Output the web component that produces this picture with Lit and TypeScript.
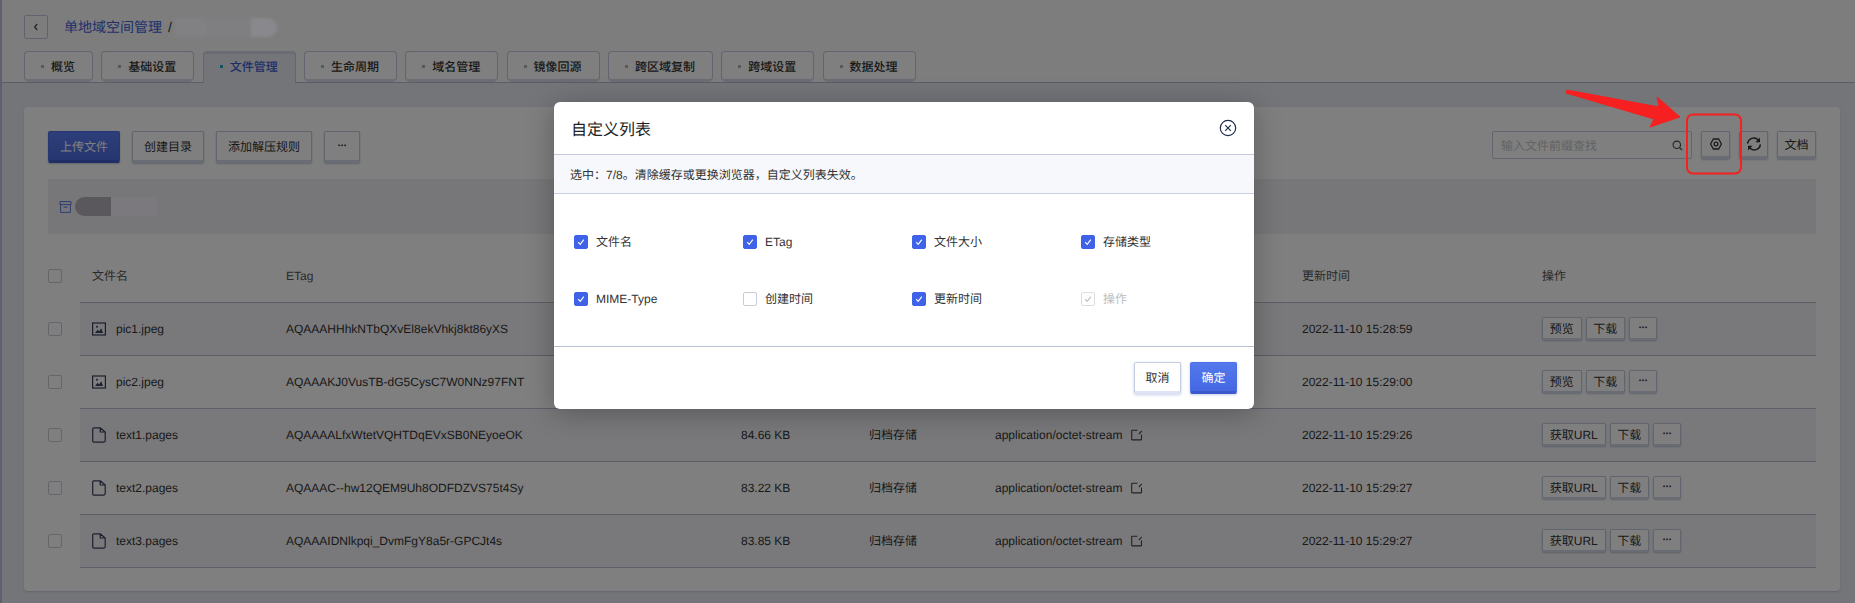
import { LitElement, html, css, svg } from "lit";
import { customElement } from "lit/decorators.js";

const tabs = ["概览", "基础设置", "文件管理", "生命周期", "域名管理", "镜像回源", "跨区域复制", "跨域设置", "数据处理"];

type Row = { name: string; kind: "img" | "file"; etag: string; size: string; store: string; mime: string; time: string; first: string };
const rows: Row[] = [
  { name: "pic1.jpeg", kind: "img", etag: "AQAAAHHhkNTbQXvEl8ekVhkj8kt86yXS", size: "", store: "", mime: "", time: "2022-11-10 15:28:59", first: "预览" },
  { name: "pic2.jpeg", kind: "img", etag: "AQAAAKJ0VusTB-dG5CysC7W0NNz97FNT", size: "", store: "", mime: "", time: "2022-11-10 15:29:00", first: "预览" },
  { name: "text1.pages", kind: "file", etag: "AQAAAALfxWtetVQHTDqEVxSB0NEyoeOK", size: "84.66 KB", store: "归档存储", mime: "application/octet-stream", time: "2022-11-10 15:29:26", first: "获取URL" },
  { name: "text2.pages", kind: "file", etag: "AQAAAC--hw12QEM9Uh8ODFDZVS75t4Sy", size: "83.22 KB", store: "归档存储", mime: "application/octet-stream", time: "2022-11-10 15:29:27", first: "获取URL" },
  { name: "text3.pages", kind: "file", etag: "AQAAAIDNlkpqi_DvmFgY8a5r-GPCJt4s", size: "83.85 KB", store: "归档存储", mime: "application/octet-stream", time: "2022-11-10 15:29:27", first: "获取URL" },
];

const columns: { label: string; state: "on" | "off" | "locked" }[] = [
  { label: "文件名", state: "on" },
  { label: "ETag", state: "on" },
  { label: "文件大小", state: "on" },
  { label: "存储类型", state: "on" },
  { label: "MIME-Type", state: "on" },
  { label: "创建时间", state: "off" },
  { label: "更新时间", state: "on" },
  { label: "操作", state: "locked" },
];

const imgIcon = svg`<svg class="ficon" width="14" height="14" viewBox="0 0 14 14"><rect x=".6" y="1" width="12.8" height="12" fill="none" stroke="#39415c" stroke-width="1.2"/><path d="M3 11l2.6-3.2 1.6 1.7 2-3.2L11 11z" fill="#39415c"/><circle cx="5" cy="4.8" r="1" fill="#39415c"/></svg>`;
const fileIcon = svg`<svg class="ficon" width="14" height="16" viewBox="0 0 14 16"><path d="M1.8.8h6.4L13.2 5v8.6a1.5 1.5 0 0 1-1.5 1.5H1.8A1.2 1.2 0 0 1 .7 13.9V1.9A1.1 1.1 0 0 1 1.8.8zM8.2.8V5h5" fill="none" stroke="#39415c" stroke-width="1.2" stroke-linejoin="round"/></svg>`;
const editIcon = svg`<svg width="12" height="12" viewBox="0 0 12 12"><path d="M6.5 1.2H1.3a.6.6 0 0 0-.6.6v8.4c0 .4.3.7.7.7h8.4c.4 0 .7-.3.7-.7V5.4M7.8 5.2l3-3.4" fill="none" stroke="#444" stroke-width="1.1"/></svg>`;
const check = svg`<svg width="10" height="10" viewBox="0 0 10 10"><path d="M2.2 5.2l2 2.2 3.6-4.8" fill="none" stroke="currentColor" stroke-width="1.1"/></svg>`;

@customElement("app-root")
export class AppRoot extends LitElement {
  static styles = css`
    :host { display: block; font-family: "Liberation Sans", "Noto Sans CJK SC", sans-serif; font-size: 12px; color: #333; text-rendering: geometricPrecision; }
    * { box-sizing: border-box; }
    .page { position: relative; width: 100%; height: 603px; overflow: hidden; background: #e8eaf3; box-shadow: inset 2px 0 0 #b9c2da; }
    .top { background: #fbfbfc; padding: 15px 0 0 22px; border-bottom: 1px solid #b6bccd; height: 83px; margin-left: 2px; }
    .crumb { display: flex; align-items: center; height: 24px; }
    .back { width: 24px; height: 24px; border: 1px solid #c2c8d8; border-radius: 2px; display: flex; align-items: center; justify-content: center; }
    .crumb a { margin-left: 16px; font-size: 14px; color: #4060d8; }
    .sep { margin-left: 6px; font-size: 14px; color: #333; }
    .blur { position: relative; z-index: 1; display: flex; height: 19px; margin-left: 3px; filter: blur(1.5px); }
    .blur i { display: block; height: 100%; }
    .blur .a { width: 31px; background: #818183; }
    .blur .b { width: 45px; background: #7f7f81; }
    .blur .c { width: 26px; background: #89898d; border-radius: 0 10px 10px 0; }
    .tabs { display: flex; gap: 8.3px; margin-top: 12px; height: 31px; }
    .tab { display: flex; align-items: center; height: 31px; padding: 2px 17px 0 16px; border: 1px solid #c4cadb; border-bottom: 3px solid #d6dbeb; border-radius: 4px 4px 5px 5px; background: #fff; color: #333; font-weight: 500; }
    .tab .dot { width: 3px; height: 3px; margin-right: 7px; background: #b0b0b0; }
    .tab.on { background: #e8eaf3; border-top: 3px solid #d3d8e8; border-bottom: 0; color: #3f5cd0; border-radius: 4px 4px 0 0; height: 32px; padding-top: 0; padding-bottom: 4px; }
    .tab.on .dot { background: #24a8c4; }
    .card { margin: 24px 15px 0 24px; padding: 24px 24px 23px; background: #fff; border-radius: 4px; box-shadow: 0 1px 2px rgba(70,80,120,.2); }
    .bar { display: flex; align-items: flex-start; gap: 12px; height: 32px; }
    .btn { display: inline-flex; align-items: center; justify-content: center; height: 32px; padding: 0 11px; border: 1px solid #c4cadb; border-bottom: 3px solid #d3d8e9; border-radius: 2px; background: #fff; color: #333; font-size: 12px; box-shadow: 0 1px 2px rgba(60,70,110,.3); white-space: nowrap; }
    .btn.primary { background: linear-gradient(#5a7df4, #4a6bdf); border-color: #4d6fe6; border-bottom-color: #3f5dc8; color: #fff; }
    .btn.sm { height: 28px; }
    .btn.xs { height: 23px; padding: 0 6.75px; border-bottom-width: 2px; }
    .btn.more { width: 36px; padding: 0; letter-spacing: -.6px; font-weight: 700; font-size: 11px; }
    .btn.xs.more { width: 28px; padding: 0; }
    .right { margin-left: auto; display: flex; gap: 9px; align-items: center; }
    .search { display: flex; align-items: center; justify-content: space-between; width: 200px; height: 28px; padding: 0 8px; border: 1px solid #c4cadb; border-radius: 2px; background: #fff; color: #c6c6c6; }
    .sq { width: 29px; padding: 0; }
    .doc { width: 39px; padding: 0; }
    .strip { display: flex; align-items: center; height: 55px; margin-top: 16px; padding-left: 11px; background: #eeeff4; }
    .pill { position: relative; z-index: 1; display: flex; height: 19px; margin-left: 3px; filter: blur(.4px); }
    .pill .d { width: 36px; background: #5a585c; border-radius: 10px 0 0 10px; }
    .pill .l { width: 47px; background: #7b797d; }
    .table { margin-top: 16px; }
    .row { display: grid; grid-template-columns: 32px 1fr; height: 53px; }
    .cb-cell { display: flex; align-items: center; padding-bottom: 1px; }
    .cells { display: grid; grid-template-columns: 194px 455px 128px 126px 307px 240px 286px; border-bottom: 1px solid #b8bdd0; padding-bottom: 1px; align-items: center; }
    .row.odd .cells { background: #f2f3f7; }
    .cell { padding-left: 12px; display: flex; align-items: center; white-space: nowrap; color: #333; }
    .head .cell { color: #555; }
    .ficon { margin-right: 10px; flex: none; }
    .mime svg { margin-left: 9px; }
    .acts { gap: 4px; }
    .box { width: 14px; height: 14px; border: 1px solid #c8ccd8; border-radius: 2px; background: #fff; display: inline-flex; align-items: center; justify-content: center; flex: none; }
    .box.on { background: #3f63e8; border-color: #3f63e8; color: #fff; }
    .box.locked { border-color: #dcdcdc; color: #bbb; }
    .scrim { position: absolute; inset: 0; background: rgba(0, 0, 0, .5); }
    .modal { position: absolute; z-index: 2; left: 554px; top: 102px; width: 700px; height: 307px; background: #fff; border-radius: 6px; box-shadow: 0 4px 28px rgba(0,0,0,.28); display: flex; flex-direction: column; overflow: hidden; }
    .m-head { display: flex; align-items: center; justify-content: space-between; height: 53px; padding: 0 17px; border-bottom: 1px solid #c3cadb; font-size: 16px; color: #222; flex: none; }
    .notice { display: flex; align-items: center; height: 39px; padding-left: 16px; background: #f7f8fb; border-bottom: 1px solid #c9d0e2; color: #333; flex: none; }
    .m-body { display: grid; grid-template-columns: repeat(4, 169px); grid-auto-rows: 57px; padding: 19px 0 0 20px; height: 153px; border-bottom: 1px solid #b6c2d0; flex: none; }
    .opt { display: flex; align-items: center; gap: 8px; color: #333; }
    .opt.locked { color: #bdbdbd; }
    .m-foot { display: flex; justify-content: flex-end; gap: 9px; padding: 15px 17px 0 0; }
    .m-foot .btn { width: 47px; padding: 0; border-color: #c5cde0; border-bottom-color: #dde2f4; box-shadow: 0 1px 3px rgba(70,90,170,.3); }
    .m-foot .btn.primary { background: linear-gradient(#5379ec, #4467e2); border-color: #4a6fe6; border-bottom-color: #3b59cb; }
    .annot { position: absolute; z-index: 3; inset: 0; width: 100%; height: 100%; pointer-events: none; }
  `;

  private box(state: string) {
    return html`<span class="box ${state}">${state === "off" ? "" : check}</span>`;
  }

  render() {
    return html`<div class="page">
      <div class="top">
        <div class="crumb">
          <div class="back"><svg width="8" height="10" viewBox="0 0 8 10"><path d="M5.2 2 2.6 5l2.6 3" fill="none" stroke="#444" stroke-width="1.2"/></svg></div>
          <a>单地域空间管理</a><span class="sep">/</span>
          <div class="blur"><i class="a"></i><i class="b"></i><i class="c"></i></div>
        </div>
        <div class="tabs">
          ${tabs.map((t, i) => html`<div class="tab ${i === 2 ? "on" : ""}"><span class="dot"></span>${t}</div>`)}
        </div>
      </div>

      <div class="card">
        <div class="bar">
          <span class="btn primary">上传文件</span>
          <span class="btn">创建目录</span>
          <span class="btn">添加解压规则</span>
          <span class="btn more">···</span>
          <div class="right">
            <div class="search"><span>输入文件前缀查找</span>
              <svg width="11" height="11" viewBox="0 0 11 11"><circle cx="4.8" cy="4.8" r="3.7" fill="none" stroke="#444" stroke-width="1.1"/><path d="M7.6 7.6 10 10" stroke="#444" stroke-width="1.1"/></svg>
            </div>
            <span class="btn sm sq"><svg width="14" height="14" viewBox="0 0 14 14"><path d="M4.3 2h5.4l2.7 5-2.7 5H4.3L1.6 7z" fill="none" stroke="#333" stroke-width="1.3" stroke-linejoin="round"/><circle cx="7" cy="7" r="1.9" fill="none" stroke="#333" stroke-width="1.2"/></svg></span>
            <span class="btn sm sq"><svg width="16" height="14" viewBox="0 0 16 14"><path d="M1.6 6.6A6.2 6.2 0 0 1 12.4 3.2M14.4 7.4A6.2 6.2 0 0 1 3.6 10.8" fill="none" stroke="#333" stroke-width="1.5"/><path d="M14 .6v4.6H9.4zM2 13.4V8.8h4.6z" fill="#333"/></svg></span>
            <span class="btn sm doc">文档</span>
          </div>
        </div>
        <div class="strip">
          <svg width="13" height="12" viewBox="0 0 13 12"><path d="M1 .6h11v3H1zM1.6 3.6v7.8h9.8V3.6M4.5 6.2h4" fill="none" stroke="#5b78e6" stroke-width="1"/></svg>
          <div class="pill"><div class="d"></div><div class="l"></div></div>
        </div>
        <div class="table">
          <div class="row head">
            <div class="cb-cell">${this.box("off")}</div>
            <div class="cells">
              <div class="cell">文件名</div><div class="cell">ETag</div><div class="cell">文件大小</div><div class="cell">存储类型</div><div class="cell">MIME-Type</div><div class="cell">更新时间</div><div class="cell">操作</div>
            </div>
          </div>
          ${rows.map((r, i) => html`<div class="row ${i % 2 === 0 ? "odd" : ""}">
            <div class="cb-cell">${this.box("off")}</div>
            <div class="cells">
              <div class="cell">${r.kind === "img" ? imgIcon : fileIcon}${r.name}</div>
              <div class="cell">${r.etag}</div>
              <div class="cell">${r.size}</div>
              <div class="cell">${r.store}</div>
              <div class="cell mime">${r.mime}${r.mime ? editIcon : ""}</div>
              <div class="cell">${r.time}</div>
              <div class="cell acts"><span class="btn xs">${r.first}</span><span class="btn xs">下载</span><span class="btn xs more">···</span></div>
            </div>
          </div>`)}
        </div>
      </div>

      <div class="scrim"></div>

      <div class="modal">
        <div class="m-head">自定义列表
          <svg width="18" height="18" viewBox="0 0 18 18"><circle cx="9" cy="9" r="7.7" fill="none" stroke="#1f2d4d" stroke-width="1.2"/><path d="M6.2 6.2l5.6 5.6M11.8 6.2l-5.6 5.6" stroke="#1f2d4d" stroke-width="1.2"/></svg>
        </div>
        <div class="notice">选中：7/8。清除缓存或更换浏览器，自定义列表失效。</div>
        <div class="m-body">
          ${columns.map((c) => html`<label class="opt ${c.state === "locked" ? "locked" : ""}">${this.box(c.state)}${c.label}</label>`)}
        </div>
        <div class="m-foot"><span class="btn">取消</span><span class="btn primary">确定</span></div>
      </div>

      <svg class="annot" viewBox="0 0 1855 603">
        <path d="M1567 90 1659 107 1657 97 1680 117 1650 127 1654 119 1566 93Z" fill="#f5201f" stroke="#f5201f" stroke-width="1" stroke-linejoin="round"/>
        <rect x="1687" y="114.5" width="54" height="59" rx="6" fill="none" stroke="#f5201f" stroke-width="2"/>
      </svg>
    </div>`;
  }
}
